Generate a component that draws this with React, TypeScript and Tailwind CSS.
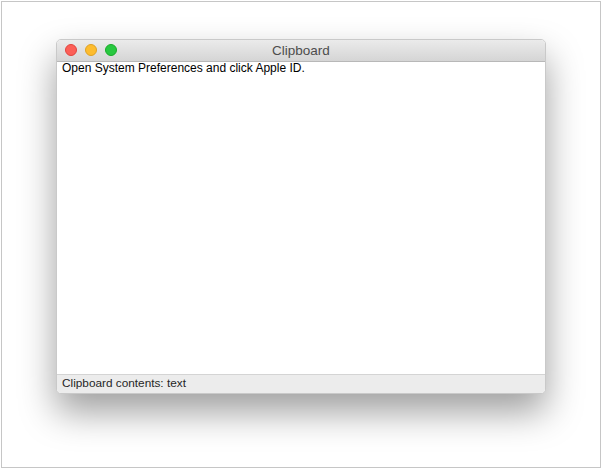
export default function App() {
  return (
    <div className="w-[602px] h-[469px] bg-white p-px font-['Liberation_Sans',Arial,sans-serif]">
      <div className="w-full h-full border border-[#c6c6c6] bg-white pt-[37px] pl-[54px]">
        <div className="w-[490px] h-[355px] flex flex-col rounded-[5px] border border-[#c9c9c9] overflow-hidden bg-white shadow-[0_18px_36px_rgba(0,0,0,0.38)]">
          <div className="relative h-[22px] shrink-0 flex items-center justify-center pt-[2px] bg-gradient-to-b from-[#ebebeb] to-[#d5d5d5] border-b border-[#b8b8b8]">
            <div className="absolute left-[8px] top-[4px] flex gap-[8px]">
              <span className="w-3 h-3 rounded-full bg-[#fc5f57] border border-[#e0443e]" />
              <span className="w-3 h-3 rounded-full bg-[#fdbc2e] border border-[#dea123]" />
              <span className="w-3 h-3 rounded-full bg-[#28c840] border border-[#1aab29]" />
            </div>
            <span className="text-[13.5px] text-[#4d4d4d]">Clipboard</span>
          </div>
          <div className="flex-1 px-[5px] -mt-px text-[12px] leading-[14px] text-black">
            Open System Preferences and click Apple ID.
          </div>
          <div className="h-[19px] shrink-0 flex items-center px-[5px] bg-[#ececec] border-t border-[#d4d4d4] text-[11.8px] text-[#262626]">
            Clipboard contents: text
          </div>
        </div>
      </div>
    </div>
  );
}
